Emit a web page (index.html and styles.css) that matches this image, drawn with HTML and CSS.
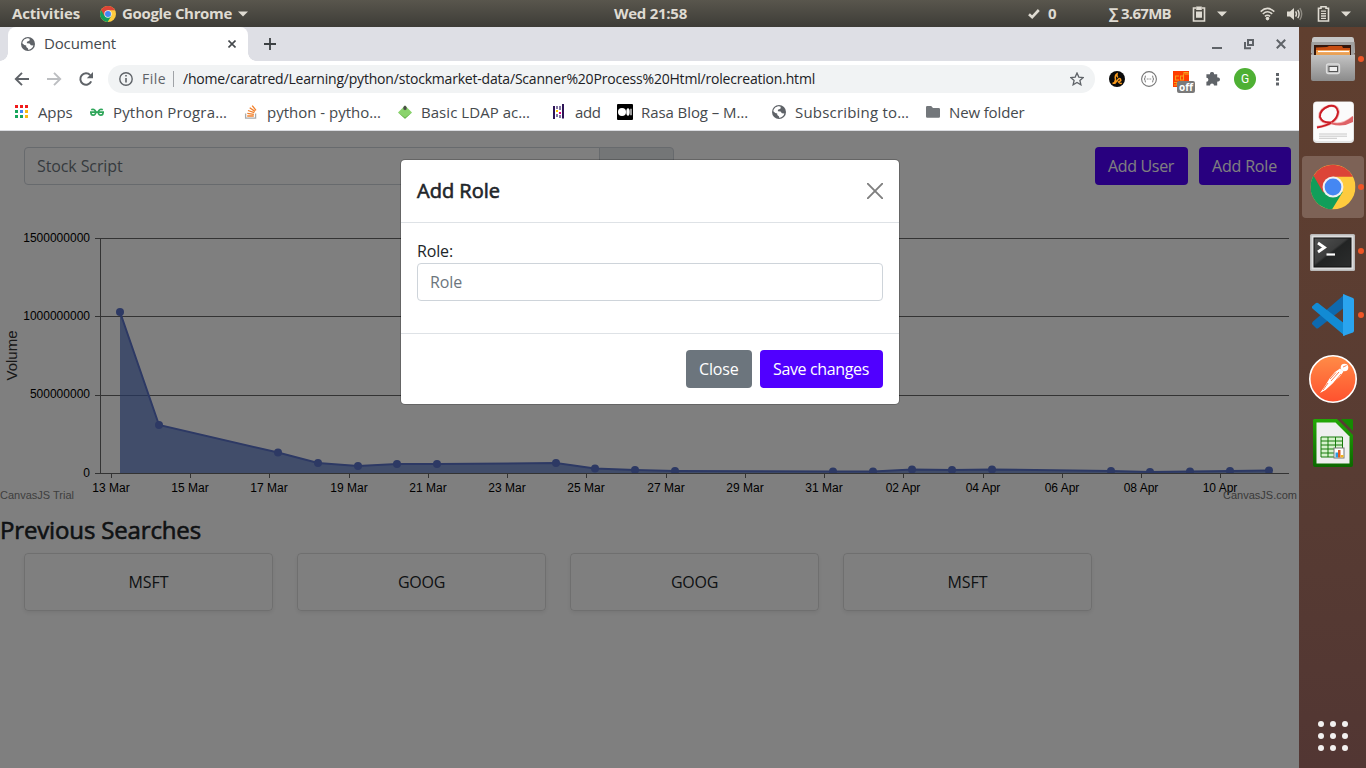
FILE: index.html
```html
<!DOCTYPE html>
<html lang="en">
<head>
<meta charset="utf-8">
<title>Document</title>
<link rel="stylesheet" href="styles.css">
</head>
<body>
<svg class="defs" width="0" height="0">
  <defs>
    <symbol id="chrome" viewBox="0 0 44 44">
      <circle cx="22" cy="22" r="22" fill="#fecb3e"/>
      <path d="M22 22 L3 11 A22 22 0 0 0 21 44 L31.5 27 Z" fill="#119e5a"/>
      <path d="M3 11 A22 22 0 0 1 41.5 12 L22 12 L12.5 27.5 Z" fill="#dc4437"/>
      <circle cx="22" cy="22" r="10.2" fill="#f1f1f1"/>
      <circle cx="22" cy="22" r="8.2" fill="#4587f3"/>
    </symbol>
    <symbol id="globe" viewBox="0 0 16 16">
      <circle cx="8" cy="8" r="7" fill="#5f6368"/>
      <path d="M8.5 2.2 L9.8 2.6 L9.8 4.2 L8.3 5.3 L6.9 5.7 L6.9 7.3 L9.6 7.4 L10.9 9.2 L13.4 9.5 C12.8 12 10.5 13.8 8 13.8 L8.1 12.4 L6.3 11 L6.2 9.6 L4.3 9 L2.3 7.2 C2.6 4.4 5.2 2 8.5 2.2Z" fill="#fff"/>
      <path d="M8.2 2 L11.5 3 L13.4 6 L13.5 8.4 L11.2 8 L9.8 6.8 L8.6 6.8 L9.6 5.5 L11 4.6Z" fill="#5f6368"/>
      <path d="M4.5 3.6 L7 3 L6 5 L5 6.5 L6.4 8.5 L3 7.5Z" fill="#fff"/>
    </symbol>
    <symbol id="caret" viewBox="0 0 10 6"><path d="M0 0.5H10L5 5.5Z" fill="#dfdbd2"/></symbol>
  </defs>
</svg>

<header class="topbar">
  <span class="t-activities">Activities</span>
  <svg width="16" height="16"><use href="#chrome"/></svg>
  <span class="t-app">Google Chrome</span>
  <svg width="10" height="6"><use href="#caret"/></svg>
  <span class="t-clock">Wed 21:58</span>
  <svg width="12" height="12" viewBox="0 0 12 12"><path d="M1 6.2 L4.2 9.2 L10.8 2" fill="none" stroke="#dfdbd2" stroke-width="2.6"/></svg>
  <span>0</span>
  <span class="t-net">∑ 3.67MB</span>
  <svg width="14" height="16" viewBox="0 0 14 16"><path d="M4 2H1.5V15H12.5V2H10" fill="none" stroke="#dfdbd2" stroke-width="1.6"/><path d="M4.2 0.5H9.8V4H4.2ZM4 5.5H10V11.8H4Z" fill="#dfdbd2"/></svg>
  <svg width="10" height="6"><use href="#caret"/></svg>
  <svg width="15" height="14" viewBox="0 0 15 14"><g fill="none" stroke="#dfdbd2" stroke-width="1.5"><path d="M0.7 4.6 Q7.5 -1.8 14.3 4.6"/><path d="M2.8 7 Q7.5 2.6 12.2 7"/><path d="M4.9 9.4 Q7.5 7 10.1 9.4"/></g><circle cx="7.5" cy="11.6" r="1.8" fill="#dfdbd2"/></svg>
  <svg width="16" height="14" viewBox="0 0 16 14"><path d="M0 4.5H3L7 1V13L3 9.5H0Z" fill="#dfdbd2"/><g fill="none" stroke="#dfdbd2" stroke-width="1.4"><path d="M8.6 4.4 Q10.4 7 8.6 9.6"/><path d="M10.8 2.8 Q13.4 7 10.8 11.2"/><path d="M12.8 1.2 Q16.6 7 12.8 12.8" stroke="#8d8a82"/></g></svg>
  <svg width="13" height="16" viewBox="0 0 13 16"><path d="M4 2.2V0.8H9V2.2H11.5V15H1.5V2.2Z" fill="none" stroke="#dfdbd2" stroke-width="1.6"/><path d="M4 5.2H9M4 7.6H9M4 10H9M4 12.4H9" stroke="#dfdbd2" stroke-width="1.3"/></svg>
  <svg width="10" height="6"><use href="#caret"/></svg>
</header>

<div class="desktop">
<main class="browser">
  <div class="tabstrip">
    <div class="tab">
      <svg width="16" height="16"><use href="#globe"/></svg>
      <span class="tab-title">Document</span>
      <svg class="tab-x" width="8" height="8" viewBox="0 0 8 8"><path d="M0.5 0.5L7.5 7.5M7.5 0.5L0.5 7.5" stroke="#45494d" stroke-width="1.6"/></svg>
    </div>
    <svg class="newtab" width="12" height="12" viewBox="0 0 12 12"><path d="M6 0V12M0 6H12" stroke="#3c4043" stroke-width="1.8"/></svg>
    <div class="winctl">
      <svg width="10" height="12" viewBox="0 0 10 12"><path d="M0 10H10" stroke="#5f6368" stroke-width="2"/></svg>
      <svg width="10" height="12" viewBox="0 0 10 12"><path d="M4 2H9V7H4ZM1 4V10.2H7" fill="none" stroke="#5f6368" stroke-width="2"/></svg>
      <svg width="10" height="12" viewBox="0 0 10 12"><path d="M0.8 1.8L9.2 10.2M9.2 1.8L0.8 10.2" stroke="#5f6368" stroke-width="2"/></svg>
    </div>
  </div>

  <div class="toolbar">
    <svg width="16" height="16" viewBox="0 0 16 16"><path d="M15 8H2.2M8 1.8L1.8 8L8 14.2" fill="none" stroke="#5f6368" stroke-width="1.9"/></svg>
    <svg width="16" height="16" viewBox="0 0 16 16"><path d="M1 8H13.8M8 1.8L14.2 8L8 14.2" fill="none" stroke="#bcbec1" stroke-width="1.9"/></svg>
    <svg width="16" height="16" viewBox="0 0 16 16"><path d="M13.2 10.4A5.7 5.7 0 1 1 12.2 4.1" fill="none" stroke="#5f6368" stroke-width="2"/><path d="M15 1V7.2H8.8Z" fill="#5f6368"/></svg>
    <div class="omnibox">
      <svg width="14" height="14" viewBox="0 0 14 14"><circle cx="7" cy="7" r="6.2" fill="none" stroke="#5f6368" stroke-width="1.4"/><path d="M7 3V4.6M7 6V10.6" stroke="#5f6368" stroke-width="1.6"/></svg>
      <span class="scheme">File</span>
      <span class="url">/home/caratred/Learning/python/stockmarket-data/Scanner%20Process%20Html/rolecreation.html</span>
      <svg class="star" width="14" height="14" viewBox="0 0 14 14"><path d="M7 1L8.8 5.1L13.2 5.5L9.9 8.4L10.9 12.8L7 10.5L3.1 12.8L4.1 8.4L0.8 5.5L5.2 5.1Z" fill="none" stroke="#5f6368" stroke-width="1.3"/></svg>
    </div>
    <svg width="16" height="16" viewBox="0 0 16 16"><circle cx="8" cy="8" r="8" fill="#0b0b0b"/><path d="M3.500 12.500Q6.500 11.500 6.500 8.500Q5.500 4.500 8 3Q7.500 5.500 9 6.500M5.500 12.800L9.300 8.200Q11.500 6.500 11.800 9.500L9.500 11Q10.500 12.800 12.800 12.300" fill="none" stroke="#f99a1c" stroke-width="1.5"/></svg>
    <svg width="16" height="16" viewBox="0 0 16 16"><circle cx="8" cy="8" r="7.4" fill="none" stroke="#777" stroke-width="1.1"/><path d="M5 4.8Q3.8 5 4.1 6.5Q4.2 7.8 3 8Q4.2 8.2 4.1 9.5Q3.8 11 5 11.2M11 4.8Q12.2 5 11.9 6.5Q11.8 7.8 13 8Q11.8 8.2 11.9 9.5Q12.2 11 11 11.2" fill="none" stroke="#777" stroke-width="1"/><path d="M5.8 8H6.8M7.5 8H8.5M9.2 8H10.2" stroke="#777" stroke-width="1.2"/></svg>
    <div class="ext">
      <svg width="16" height="16" viewBox="0 0 16 16"><path d="M0 0H16V16H0Z" fill="#ff3c00"/><path d="M6 5H2.5V9H6M10.5 3.5V9H7.5V5H10.5M11 3.5V1.5H15V4M13 1.5V4M1 11.5H4V14H1" fill="none" stroke="#f6a21a" stroke-width="1.1"/></svg>
      <span class="ext-badge">off</span>
    </div>
    <svg width="16" height="16" viewBox="0 0 16 16"><path d="M5 3.200A2 2 0 0 1 9 3.200H12.200V6.400A2.100 2.100 0 0 1 12.200 10.600V14.400H9A2 2 0 0 0 5 14.400H1.400V10.800A2 2 0 0 0 1.400 6.800V3.200Z" fill="#5f6368"/><circle cx="7" cy="3" r="2" fill="#5f6368"/><circle cx="13" cy="8.500" r="2" fill="#5f6368"/></svg>
    <span class="avatar">G</span>
    <svg width="16" height="16" viewBox="0 0 16 16"><path d="M6 2h3v3H6zM6 6.8h3v3H6zM6 11.5h3v3H6z" fill="#5f6368"/></svg>
  </div>

  <nav class="bookmarks">
    <a class="bm"><svg width="16" height="16" viewBox="0 0 16 16"><path d="M1 1h3v3h-3zM6 1h3v3h-3zM11 1h3v3h-3z" fill="#f01b1b"/><path d="M1 6h3v3h-3zM1 11h3v3h-3z" fill="#18a55b"/><path d="M6 6h3v3h-3z" fill="#4285f4"/><path d="M6 11h3v3h-3z" fill="#18a55b"/><path d="M11 6h3v3h-3zM11 11h3v3h-3z" fill="#fbb910"/></svg><span class="b1">Apps</span></a>
    <a class="bm"><svg width="16" height="16" viewBox="0 0 16 16"><g fill="none" stroke="#2fa65a" stroke-width="1.7"><path d="M1 8.2H15M2.2 5.8Q5 4.2 7 7.8Q6.4 11.2 4.2 11.2Q2 11.2 2 9M13.8 5.8Q11 4.2 9 7.8Q9.6 11.2 11.8 11.2Q14 11.2 14 9"/></g></svg><span class="b2">Python Progra…</span></a>
    <a class="bm"><svg width="16" height="16" viewBox="0 0 16 16"><path d="M2.6 9.5V14.2H12.6V9.5" fill="none" stroke="#aaa" stroke-width="1.3"/><path d="M4.2 12H10.8M4.3 9.4L10.9 10.4M5 6.5L11.3 8.7M6.7 3.8L12 7.4M9.2 1.6L13 6.4" stroke="#f2802b" stroke-width="1.3"/></svg><span class="b3">python - pytho…</span></a>
    <a class="bm"><svg width="16" height="16" viewBox="0 0 16 16"><path d="M8 1.5L15 8.4L8 14.8L1 8.4Z" fill="#8ad36c"/><path d="M1 8.4L8 13.400L15 8.4L8 14.8Z" fill="#68b04e"/><path d="M8 1.500L9.600 3V5.300L8 6.300L6.400 5.300V3Z" fill="#4a4d48"/></svg><span class="b4">Basic LDAP ac…</span></a>
    <a class="bm"><svg width="16" height="16" viewBox="0 0 16 16"><path d="M3 2V15M12 0V14.5" stroke="#24094f" stroke-width="1.9"/><path d="M6 2V5M9 2V6M6 10V13M9 11V14" stroke="#6f5f92" stroke-width="1.7"/><path d="M6 6V8" stroke="#ffca00" stroke-width="2"/><path d="M9 8V10" stroke="#e70488" stroke-width="2"/></svg><span class="b5">add</span></a>
    <a class="bm"><svg width="16" height="16" viewBox="0 0 16 16"><rect width="16" height="16" rx="1" fill="#000"/><circle cx="5" cy="8" r="4" fill="#fff"/><ellipse cx="11" cy="8" rx="1.7" ry="3.7" fill="#fff"/><path d="M14 4.8V11.2" stroke="#fff" stroke-width="1.2"/></svg><span class="b6">Rasa Blog – M…</span></a>
    <a class="bm"><svg width="16" height="16"><use href="#globe"/></svg><span class="b7">Subscribing to…</span></a>
    <a class="bm"><svg width="16" height="16" viewBox="0 0 16 16"><path d="M1 3.2Q1 2 2.2 2H6.2L8 4H13.8Q15 4 15 5.2V12.6Q15 13.8 13.8 13.8H2.2Q1 13.8 1 12.6Z" fill="#73777b"/></svg><span class="b8">New folder</span></a>
  </nav>

  <section class="viewport">
    <div class="page">
      <div class="page-head">
        <div class="search"><span class="search-input">Stock Script</span><span class="search-btn">Search</span></div>
        <div class="page-actions"><button class="btn primary au">Add User</button><button class="btn primary ar">Add Role</button></div>
      </div>
      <svg class="chart" width="1299" height="300" viewBox="0 201 1299 300">
        <clipPath id="plot"><rect x="100" y="230" width="1189" height="243.5"/></clipPath>
        <g class="grid"><path d="M95 238.500H1289M95 316.500H1289M95 395.500H1289"/></g>
        <g clip-path="url(#plot)">
          <path class="area" d="M120 473V312L159 425L278 452.500L318 463L358 466L397 464L437 464L556 463L595 468.500L635 470L675 471L833 471.500L873 471.500L912 469.500L952 470L992 469.500L1111 471L1150 472L1190 471.500L1230 471L1269 470.500V473Z"/>
          <path class="line" d="M120 312L159 425L278 452.500L318 463L358 466L397 464L437 464L556 463L595 468.500L635 470L675 471L833 471.500L873 471.500L912 469.500L952 470L992 469.500L1111 471L1150 472L1190 471.500L1230 471L1269 470.500"/>
          <g class="dots"><circle cx="120" cy="312" r="4"/><circle cx="159" cy="425" r="4"/><circle cx="278" cy="452.500" r="4"/><circle cx="318" cy="463" r="4"/><circle cx="358" cy="466" r="4"/><circle cx="397" cy="464" r="4"/><circle cx="437" cy="464" r="4"/><circle cx="556" cy="463" r="4"/><circle cx="595" cy="468.500" r="4"/><circle cx="635" cy="470" r="4"/><circle cx="675" cy="471" r="4"/><circle cx="833" cy="471.500" r="4"/><circle cx="873" cy="471.500" r="4"/><circle cx="912" cy="469.500" r="4"/><circle cx="952" cy="470" r="4"/><circle cx="992" cy="469.500" r="4"/><circle cx="1111" cy="471" r="4"/><circle cx="1150" cy="472" r="4"/><circle cx="1190" cy="471.500" r="4"/><circle cx="1230" cy="471" r="4"/><circle cx="1269" cy="470.500" r="4"/></g>
        </g>
        <g class="grid"><path d="M100.500 238V473M95 473.500H1289M111.500 474V478M190.500 474V478M269.500 474V478M349.500 474V478M428.500 474V478M507.500 474V478M586.500 474V478M666.500 474V478M745.500 474V478M824.500 474V478M903.500 474V478M983.500 474V478M1062.500 474V478M1141.500 474V478M1220.500 474V478"/></g>
        <g class="ylab"><text x="90" y="242">1500000000</text><text x="90" y="320">1000000000</text><text x="90" y="398">500000000</text><text x="90" y="477">0</text></g>
        <g class="xlab"><text x="111" y="492">13 Mar</text><text x="190" y="492">15 Mar</text><text x="269" y="492">17 Mar</text><text x="349" y="492">19 Mar</text><text x="428" y="492">21 Mar</text><text x="507" y="492">23 Mar</text><text x="586" y="492">25 Mar</text><text x="666" y="492">27 Mar</text><text x="745" y="492">29 Mar</text><text x="824" y="492">31 Mar</text><text x="903" y="492">02 Apr</text><text x="983" y="492">04 Apr</text><text x="1062" y="492">06 Apr</text><text x="1141" y="492">08 Apr</text><text x="1220" y="492">10 Apr</text></g>
        <text class="axis-title" transform="translate(17 355.500) rotate(-90)">Volume</text>
        <text class="credit trial" x="0" y="499">CanvasJS Trial</text>
        <text class="credit com" x="1297" y="499">CanvasJS.com</text>
      </svg>
      <h2 class="prev">Previous Searches</h2>
      <div class="cards"><div class="card m">MSFT</div><div class="card g">GOOG</div><div class="card g">GOOG</div><div class="card m">MSFT</div></div>
    </div>
    <div class="backdrop">
      <div class="modal">
        <div class="modal-head"><h5 class="modal-title">Add Role</h5><svg width="16" height="16" viewBox="0 0 16 16"><path d="M0.7 0.7L15.300 15.300M15.300 0.700L0.700 15.300" stroke="#7f7f7f" stroke-width="1.900" stroke-linecap="round"/></svg></div>
        <div class="modal-body"><label class="lbl">Role:</label><div class="field">Role</div></div>
        <div class="modal-foot"><button class="btn secondary cl">Close</button><button class="btn primary sv">Save changes</button></div>
      </div>
    </div>
  </section>
</main>

<aside class="dock">
  <div class="app running"><svg width="67" height="64" viewBox="0 0 67 64">
    <defs><linearGradient id="cab" x2="0" y2="1"><stop offset="0" stop-color="#c4c4c4"/><stop offset="1" stop-color="#8b8b8b"/></linearGradient></defs>
    <path d="M15 10H53Q55 10 55 12.500L56 26H12L13 12.500Q13 10 15 10Z" fill="#c6c6c6"/><path d="M12.500 15H55.500V29H12.500Z" fill="#a0a0a0"/>
    <path d="M15 18H52V30H15Z" fill="#34160c"/><path d="M17 20.500L28 20L30 19H43L44 21H51V30H17Z" fill="#c74d11"/><path d="M17 23H51V30H17Z" fill="#ef9b48"/><path d="M19 24.500H50" stroke="#fff" stroke-width="1.300"/><path d="M17 26H51V30H17Z" fill="#e8a155"/>
    <path d="M15 28H53L56 27.500V52Q56 54 54 54H14Q12 54 12 52V27.500Z" fill="url(#cab)"/>
    <rect x="27.500" y="37" width="13" height="9.500" rx="2" fill="#b5b5b5" stroke="#ddd" stroke-width="1.300"/><rect x="30" y="39.500" width="8.500" height="5" fill="#eee" stroke="#555" stroke-width="1"/></svg></div>
  <div class="app"><svg width="67" height="64" viewBox="0 0 67 64">
    <rect x="14" y="10.500" width="41" height="41.500" rx="4" fill="#e4e4e4"/><rect x="15" y="11" width="39" height="39" rx="3" fill="#fbfbfb"/>
    <path d="M18 36Q38 34 39.500 21Q39 13.500 30 15Q20 18 20.500 26Q23 33 33 32Q43 35 54 26" fill="none" stroke="#f3b3b3" stroke-width="2.600"/><path d="M18 36.500Q38 33 39 21Q38 13.500 30 15Q20 19 21 26Q23 32 32 31.500" fill="none" stroke="#cc1c24" stroke-width="2"/><path d="M32 31Q42 35.500 54 25V31Q43 37 32 33Z" fill="#df6367"/>
    <path d="M20 43H48M20 45.200H48M20 47.300H38" stroke="#c8c8c8" stroke-width="1"/></svg></div>
  <div class="app active running"><svg width="67" height="64" viewBox="0 0 67 64"><use href="#chrome" x="11.500" y="9.500" width="45" height="45"/></svg></div>
  <div class="app running"><svg width="67" height="64" viewBox="0 0 67 64">
    <defs><linearGradient id="term" x2="1" y2="1"><stop offset="0" stop-color="#505151"/><stop offset=".45" stop-color="#3c3d3d"/><stop offset=".5" stop-color="#222424"/><stop offset="1" stop-color="#2c2d2d"/></linearGradient></defs>
    <rect x="11" y="15" width="45" height="37" rx="1.500" fill="#b9b9b9"/><rect x="12.500" y="16.500" width="42" height="34" fill="#dedede"/><rect x="15" y="19" width="37" height="29" fill="url(#term)" stroke="#111" stroke-width="1"/>
    <path d="M19 24L25.500 28.500L19 33" fill="none" stroke="#fff" stroke-width="2.800"/><path d="M27.500 35.500H36" stroke="#fff" stroke-width="2.200"/></svg></div>
  <div class="app running"><svg width="67" height="64" viewBox="0 0 67 64">
    <path d="M13 41L17 45Q18 46 19.500 45L46 24V11L14 38.500Q12.500 40 13 41Z" fill="#0e69ae"/><path d="M13 23.500L17 20Q18 19.500 19 20L46 41V53L14 26Q12.500 25 13 23.500Z" fill="#128bd4"/><path d="M44 11L54 15Q55 15.500 55 17V47.500Q55 49 54 49.500L44 53Z" fill="#2aa4ef"/></svg></div>
  <div class="app"><svg width="67" height="64" viewBox="0 0 67 64">
    <defs><linearGradient id="post" x2="0" y2="1"><stop offset="0" stop-color="#ff8c47"/><stop offset="1" stop-color="#ff512e"/></linearGradient></defs>
    <circle cx="34" cy="32" r="23.200" fill="url(#post)" stroke="#fff" stroke-width="1.600"/><circle cx="45.500" cy="20.500" r="3.800" fill="#fff"/><path d="M41 21.500L44.500 24.500L40.500 30L32 38L26.500 43L21 46L26 39L30.500 31.500L36 25Z" fill="#fff"/><path d="M40 25L32 34M42 27L35 35.500M37 25.500L31 32M44 20L47.500 18.500M24 43L29 36" stroke="#ff7440" stroke-width=".9"/></svg></div>
  <div class="app"><svg width="67" height="64" viewBox="0 0 67 64">
    <defs><linearGradient id="calc" x2="0" y2="1"><stop offset="0" stop-color="#23a807"/><stop offset="1" stop-color="#0c6700"/></linearGradient></defs>
    <path d="M15.500 8H38L54 24V54Q54 56 52 56H16Q14 56 14 54V9.500Q14 8 15.500 8Z" fill="url(#calc)"/><path d="M17.500 11.500H36.500L50.500 25.500V52.500H17.500Z" fill="#efefef"/><path d="M42 8H52.500Q54 8 54 9.500V20Z" fill="#168a03"/>
    <path d="M22 26H43.500V46H22Z" fill="#d6f2cc" stroke="#167a0b" stroke-width="1"/><path d="M22 30H43.500M22 34H43.500M22 38H43.500M22 42H43.500M29 26V46M36.500 26V46" stroke="#167a0b" stroke-width="1"/><rect x="35" y="37" width="10" height="10" fill="#fff" stroke="#777" stroke-width="1"/><path d="M36.500 41.500H39V46.500H36.500Z" fill="#2b9be0"/><path d="M39 39H41.500V46.500H39Z" fill="#dd5a24"/><path d="M41.700 44H44.500V46.500H41.700Z" fill="#f2b51b"/></svg></div>
  <div class="app show-apps"><svg width="67" height="64" viewBox="0 0 67 64"><g fill="#f2f0ef"><circle cx="22" cy="20" r="3"/><circle cx="34" cy="20" r="3"/><circle cx="46" cy="20" r="3"/><circle cx="22" cy="32" r="3"/><circle cx="34" cy="32" r="3"/><circle cx="46" cy="32" r="3"/><circle cx="22" cy="44" r="3"/><circle cx="34" cy="44" r="3"/><circle cx="46" cy="44" r="3"/></g></svg></div>
</aside>
</div>
</body>
</html>
```
FILE: styles.css
```css
* { box-sizing: border-box; }
body { margin: 0; width: 1366px; height: 768px; overflow: hidden; font-family: "Open Sans", "Noto Sans", sans-serif; font-size: 15px; white-space: nowrap; }
svg { display: block; flex: none; }
h2, h5 { margin: 0; }
.defs { position: absolute; }

.topbar { height: 27px; padding-left: 12px; display: grid; grid-template-columns: 88px 22px 116px 376px 414px 20px 61px 83px 25px 43px 27px 30px 24px 13px; align-items: center; background: linear-gradient(#59564d, #3d3c37); color: #dfdbd2; font-weight: 700; line-height: 24px; }
.topbar span { padding-bottom: 2px; }
.t-activities { letter-spacing: -.167px; }
.t-app { letter-spacing: -.335px; }
.t-clock { letter-spacing: -.26px; }
.t-net { letter-spacing: -.698px; }

.desktop { display: flex; height: 741px; }
.browser { width: 1299px; display: flex; flex-direction: column; background: #fff; }
.tabstrip { height: 34px; display: flex; align-items: center; padding-left: 8px; background: #dedfe5; }
.tab { position: relative; width: 240px; height: 34px; display: flex; align-items: center; padding: 0 12px; background: #fff; border-radius: 8px 8px 0 0; color: #45494d; }
.tab::before, .tab::after { content: ""; position: absolute; bottom: 0; width: 8px; height: 8px; }
.tab::before { left: -8px; background: radial-gradient(circle at 0 0, transparent 7.5px, #fff 8px); }
.tab::after { right: -8px; background: radial-gradient(circle at 100% 0, transparent 7.5px, #fff 8px); }
.tab-title { margin-left: 8px; padding-bottom: 2px; letter-spacing: -.143px; line-height: 20px; }
.tab-x { margin-left: auto; }
.newtab { margin-left: 16px; }
.winctl { margin-left: auto; margin-right: 13px; display: flex; gap: 22px; }

.toolbar { height: 35px; padding-left: 14px; display: grid; grid-template-columns: 32px 32px 30px 1001px 32px 32px 32px 29px 36px 16px; align-items: center; }
.toolbar > .avatar { width: 22px; height: 22px; border-radius: 50%; background: #4eb034; color: #fff; font: 12px/22px Roboto, sans-serif; text-align: center; }
.omnibox { width: 987px; height: 28px; margin-top: 1px; border-radius: 14px; background: #f1f3f4; display: flex; align-items: center; padding: 0 11px; font-size: 14px; line-height: 20px; }
.scheme { width: 32px; margin-left: 9px; margin-right: 9px; border-right: 1px solid #a0a3a7; line-height: 16px; color: #5f6368; letter-spacing: .461px; }
.url { color: #202124; letter-spacing: -.197px; }
.star { margin-left: auto; }
.ext { position: relative; width: 16px; }
.ext-badge { position: absolute; left: 4px; top: 10px; width: 18px; height: 12px; border-radius: 2px; background: #7a7a7a; color: #fff; font-size: 10px; font-weight: 700; line-height: 12px; text-align: center; }

.bookmarks { height: 34px; padding: 0 0 3px 14px; display: grid; grid-template-columns: 75px 154px 154px 154px 66px 154px 154px 110px; align-items: center; color: #45494d; line-height: 20px; }
.bm { display: flex; align-items: center; gap: 8px; }
.b1 { letter-spacing: -.122px; }
.b2 { letter-spacing: .167px; }
.b4 { letter-spacing: .047px; }
.b5 { letter-spacing: -.396px; }
.b6 { letter-spacing: -.076px; }
.b7 { letter-spacing: .194px; }
.b8 { letter-spacing: -.132px; }

.viewport { position: relative; height: 638px; border-top: 1px solid #dadce0; font-size: 16px; line-height: 24px; color: #212529; }
.page { height: 637px; padding-top: 16px; background: #fff; }
.page-head { display: flex; justify-content: space-between; padding: 0 8px 0 24px; height: 54px; align-items: flex-start; }
.search { display: flex; width: 650px; height: 38px; }
.search-input { width: 576px; border: 1px solid #ced4da; border-radius: 4px 0 0 4px; padding: 6px 12px; color: #6c757d; letter-spacing: -.111px; }
.search-btn { width: 75px; margin-left: -1px; border: 1px solid #ced4da; border-radius: 0 4px 4px 0; background: #e9ecef; padding: 6px 11px; }
.page-actions { display: flex; gap: 11px; }
.btn { height: 38px; border: 0; border-radius: 4px; padding: 0 0 0 13px; font: 16px/38px "Open Sans", sans-serif; color: #fff; text-align: left; white-space: nowrap; }
.primary { background: #5000ff; }
.secondary { background: #6c757d; }
.au { width: 93px; letter-spacing: -.333px; }
.ar { width: 92px; letter-spacing: -.172px; }
.cl { width: 66px; letter-spacing: -.17px; }
.sv { width: 123px; letter-spacing: -.356px; }

.chart { font-family: "Liberation Sans", Arial, sans-serif; font-size: 12px; }
.grid path { stroke: #666; fill: none; }
.area { fill: #4f71c3; fill-opacity: .7; }
.line { fill: none; stroke: #5a72c8; stroke-width: 2; }
.dots { fill: #5a72c8; }
.ylab { text-anchor: end; fill: #000; }
.xlab { text-anchor: middle; fill: #000; }
.axis-title { text-anchor: middle; font-size: 15px; fill: #333; }
.credit { font-size: 11px; }
.trial { fill: #808080; }
.com { fill: #757575; text-anchor: end; }

.prev { margin-top: 15px; height: 29px; font-size: 24px; font-weight: 500; line-height: 28px; letter-spacing: -.148px; -webkit-text-stroke: .6px; }
.cards { display: flex; gap: 24px; padding: 8px 24px 0; }
.card { width: 249px; height: 58px; border: 1px solid rgba(0, 0, 0, .125); border-radius: 4px; padding: 16px 0; text-align: center; box-shadow: 0 2px 4px rgba(0, 0, 0, .075); }
.m { letter-spacing: -.059px; }
.g { letter-spacing: -.289px; }

.backdrop { position: absolute; inset: 0; padding-top: 28px; background: rgba(0, 0, 0, .5); }
.modal { width: 500px; margin-left: 400px; border: 1px solid rgba(0, 0, 0, .2); border-radius: 5px; background: #fff; background-clip: padding-box; }
.modal-head { height: 63px; padding: 16px; display: flex; align-items: center; justify-content: space-between; border-bottom: 1px solid #dee2e6; }
.modal-title { font-size: 20px; font-weight: 500; line-height: 30px; -webkit-text-stroke: .6px; }
.modal-body { height: 110px; padding: 16px; }
.lbl { display: block; letter-spacing: -.145px; }
.field { height: 38px; border: 1px solid #ced4da; border-radius: 4px; padding: 6px 12px; color: #6c757d; letter-spacing: -.131px; }
.modal-foot { display: flex; justify-content: flex-end; gap: 8px; padding: 16px; border-top: 1px solid #dee2e6; }

.dock { width: 67px; display: flex; flex-direction: column; background: linear-gradient(#603f2f, #583c33 60%, #523633); }
.app { position: relative; height: 64px; }
.active::before { content: ""; position: absolute; left: 3px; top: 1px; width: 62px; height: 62px; border-radius: 4px; background: #7d6256; }
.active svg { position: relative; }
.running::after { content: ""; position: absolute; left: 59px; top: 29px; width: 6px; height: 6px; border-radius: 50%; background: #ef5626; }
.show-apps { margin-top: auto; }
```
